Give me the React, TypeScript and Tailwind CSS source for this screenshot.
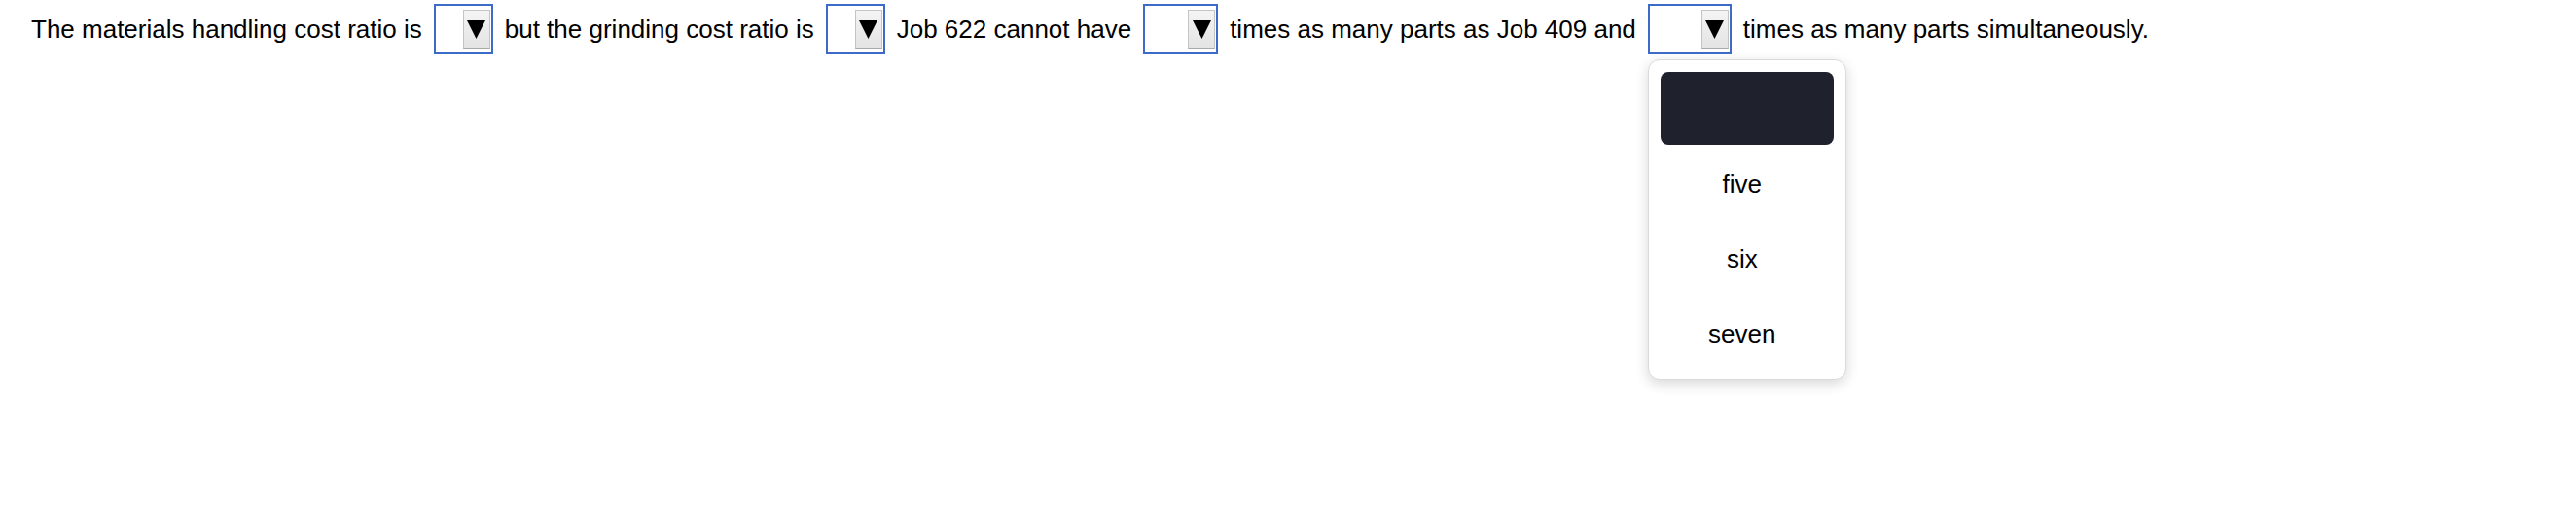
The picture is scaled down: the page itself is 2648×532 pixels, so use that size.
import React from "react";

function Select({ width, children }: { width: string; children?: React.ReactNode }) {
  return (
    <div className={`relative shrink-0 h-[51px] ${width} border-2 border-[#3d6bc8] bg-white flex items-start justify-end pr-[1px] pt-[4px]`}>
      <div className="w-[28px] h-[40px] border border-[#c4c4c4] border-b-[#a9a9a9] bg-gradient-to-b from-[#f4f4f4] to-[#e4e4e4] flex items-center justify-center">
        <svg width="19" height="19" viewBox="0 0 19 19">
          <polygon points="0,0 19,0 9.5,19" fill="#000" />
        </svg>
      </div>
      {children}
    </div>
  );
}

export default function App() {
  return (
    <div className="w-[2648px] h-[532px] bg-white font-['Liberation_Sans',Arial,sans-serif] text-black text-[26px] leading-[30px]">
      <div className="flex items-center gap-[12px] pl-[32px] pt-[4px] whitespace-nowrap">
        <span>The materials handling cost ratio is</span>
        <Select width="w-[61px]" />
        <span>but the grinding cost ratio is</span>
        <Select width="w-[61px]" />
        <span>Job 622 cannot have</span>
        <Select width="w-[77px]" />
        <span>times as many parts as Job 409 and</span>
        <Select width="w-[86px]">
          <div className="absolute left-[-2px] top-[55px] w-[204px] bg-white border border-[#dadada] rounded-[12px] shadow-[0_4px_14px_rgba(0,0,0,0.16)] px-[12px] pt-[12px] pb-[9px] flex flex-col gap-[2px] z-10">
            <div className="h-[75px] rounded-[8px] bg-[#1f222d]"></div>
            <div className="h-[75px] flex items-center justify-center pr-[10px]">five</div>
            <div className="h-[75px] flex items-center justify-center pr-[10px]">six</div>
            <div className="h-[75px] flex items-center justify-center pr-[10px]">seven</div>
          </div>
        </Select>
        <span>times as many parts simultaneously.</span>
      </div>
    </div>
  );
}
